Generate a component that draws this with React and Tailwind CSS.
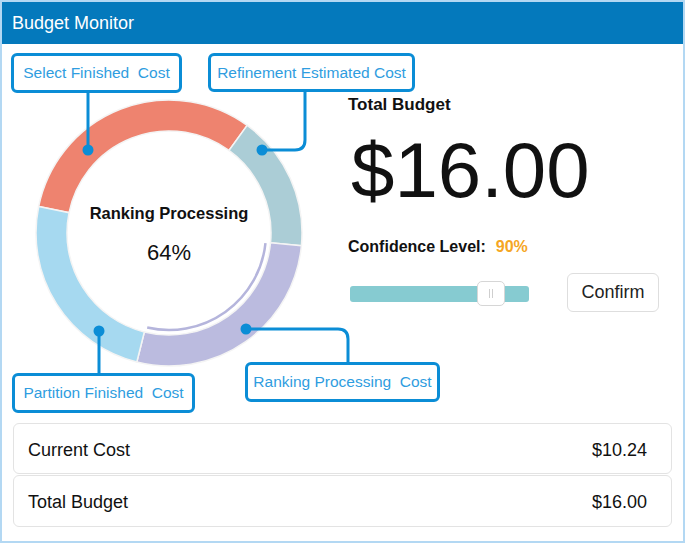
import React from 'react';

// donut geometry in page coordinates
const CX = 169;
const CY = 233;
const R_OUT = 133;
const R_IN = 102;

const segments = [
  { from: 281.5, to: 396, color: '#ee836f' },
  { from: 36, to: 95.5, color: '#abcdd6' },
  { from: 95.5, to: 194, color: '#bbbbdf' },
  { from: 194, to: 281.5, color: '#a6d9f0' },
];

function polar(r, deg) {
  const a = (deg * Math.PI) / 180;
  return [CX + r * Math.sin(a), CY - r * Math.cos(a)];
}

function sectorPath(from, to) {
  const large = to - from > 180 ? 1 : 0;
  const [x1, y1] = polar(R_OUT, from);
  const [x2, y2] = polar(R_OUT, to);
  const [x3, y3] = polar(R_IN, to);
  const [x4, y4] = polar(R_IN, from);
  return `M${x1} ${y1} A${R_OUT} ${R_OUT} 0 ${large} 1 ${x2} ${y2} L${x3} ${y3} A${R_IN} ${R_IN} 0 ${large} 0 ${x4} ${y4} Z`;
}

function arcPath(r, from, to) {
  const [x1, y1] = polar(r, from);
  const [x2, y2] = polar(r, to);
  return `M${x1} ${y1} A${r} ${r} 0 0 1 ${x2} ${y2}`;
}

const LINE = '#0b8dd6';

function Callout({ className, children }) {
  return (
    <div
      className={`absolute flex items-center justify-center rounded-[6px] border-[3px] border-[#0b8dd6] bg-white text-[15.5px] text-[#2f9de0] whitespace-pre ${className}`}
    >
      {children}
    </div>
  );
}

export default function App() {
  return (
    <div className="w-[685px] h-[544px] bg-white font-['Liberation_Sans',Arial,sans-serif] text-[#111]">
      <div className="h-[543px] border-2 border-[#b3d8f3] flex flex-col">
        {/* header */}
        <div className="h-[42px] bg-[#0479bc] px-[10px] flex items-center text-white text-[18px]">
          Budget Monitor
        </div>

        {/* top section */}
        <div className="flex h-[379px]">
          {/* chart */}
          <div className="relative w-[340px] h-[379px] shrink-0">
            <svg className="absolute inset-0 overflow-visible" width="340" height="379" viewBox="2 44 340 379">
              {segments.map((s, i) => (
                <path key={i} d={sectorPath(s.from, s.to)} fill={s.color} stroke="#f4f4f4" strokeWidth="1.5" />
              ))}
              <path d={arcPath(97, 96, 193)} fill="none" stroke="#b5b5dc" strokeWidth="2.5" />

              <g stroke={LINE} strokeWidth="3" fill="none">
                <path d="M88 93 V150" />
                <path d="M305 92 V140 Q305 150 295 150 H262" />
                <path d="M99 331 V373" />
                <path d="M246 329 H338 Q348 329 348 339 V362" />
              </g>
              <g fill={LINE}>
                <circle cx="88" cy="150" r="5.5" />
                <circle cx="262" cy="150" r="5.5" />
                <circle cx="99" cy="331" r="5.5" />
                <circle cx="246" cy="329" r="5.5" />
              </g>
            </svg>

            <div className="absolute left-[67px] top-[159px] w-[200px] flex flex-col items-center">
              <div className="text-[16.5px] leading-[20px] font-bold">Ranking Processing</div>
              <div className="mt-[17px] text-[22px] leading-[26px]">64%</div>
            </div>

            <Callout className="left-[9px] top-[9px] w-[171px] h-[40px]">Select Finished  Cost</Callout>
            <Callout className="left-[206px] top-[9px] w-[207px] h-[39px]">Refinement Estimated Cost</Callout>
            <Callout className="left-[10px] top-[329px] w-[183px] h-[40px]">Partition Finished  Cost</Callout>
            <Callout className="left-[243px] top-[318px] w-[195px] h-[40px]">Ranking Processing  Cost</Callout>
          </div>

          {/* budget column */}
          <div className="ml-[6px] pt-[51px] flex flex-col">
            <div className="text-[17px] leading-[20px] font-bold">Total Budget</div>
            <div className="mt-[17px] ml-[3px] text-[78px] leading-[77px]">$16.00</div>
            <div className="mt-[28px] text-[16px] leading-[20px] font-bold">
              Confidence Level:<span className="ml-[10px] text-[#f5a623]">90%</span>
            </div>
            <div className="mt-[16px] flex items-center">
              <div className="relative ml-[2px] w-[179px] h-[16px] mt-[3px] rounded-[3px] bg-[#86cbd1]">
                <div className="absolute left-[127px] top-[-5px] w-[28px] h-[25px] rounded-[5px] border border-[#d6d6d6] bg-white flex items-center justify-center gap-[2px]">
                  <span className="w-[1px] h-[9px] bg-[#cfcfcf]" />
                  <span className="w-[1px] h-[9px] bg-[#cfcfcf]" />
                </div>
              </div>
              <button className="ml-[38px] w-[92px] h-[39px] rounded-[6px] border border-[#dedede] bg-white text-[18px] text-[#222]">
                Confirm
              </button>
            </div>
          </div>
        </div>

        {/* summary rows */}
        <div className="mx-[11px] flex flex-col gap-[1px]">
          <div className="h-[51px] rounded-[6px] border border-[#e3e3e3] pl-[14px] pr-[24px] pt-[3px] flex items-center justify-between text-[18px]">
            <span>Current Cost</span>
            <span>$10.24</span>
          </div>
          <div className="h-[52px] rounded-[6px] border border-[#e3e3e3] pl-[14px] pr-[24px] pt-[2px] flex items-center justify-between text-[18px]">
            <span>Total Budget</span>
            <span>$16.00</span>
          </div>
        </div>
      </div>
    </div>
  );
}
